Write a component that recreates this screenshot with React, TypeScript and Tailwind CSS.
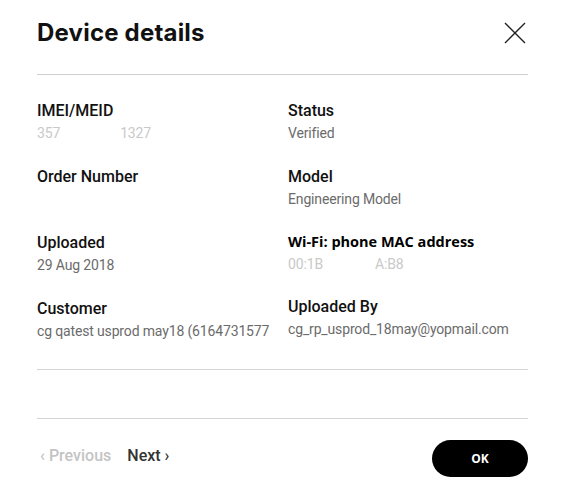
import React from "react";

const Label = ({ children }: { children: React.ReactNode }) => (
  <div className="text-[16px] leading-[22px] font-medium text-[#111]">{children}</div>
);

const Value = ({ children, light }: { children: React.ReactNode; light?: boolean }) => (
  <div className={`text-[14px] leading-[22px] tracking-[-0.15px] ${light ? "text-[#c9c9c9]" : "text-[#6b6b6b]"}`}>
    {children}
  </div>
);

export default function App() {
  return (
    <div className="w-[565px] h-[494px] bg-white font-['Roboto',sans-serif] px-[37px]">
      <div className="flex items-center justify-between h-[74px] pb-[8px]">
        <h1 className="font-['Inter',sans-serif] font-bold text-[24px] leading-[30px] text-[#111] tracking-[0.2px]">
          Device details
        </h1>
        <svg width="22" height="22" viewBox="0 0 22 22" className="mr-[2px]">
          <path d="M1 1 L21 21 M21 1 L1 21" stroke="#222" strokeWidth="1.4" fill="none" />
        </svg>
      </div>
      <div className="h-px bg-[#cfcfcf]" />
      <div className="grid grid-cols-[251px_1fr] gap-y-[22px] mt-[25px]">
        <div>
          <Label>IMEI/MEID</Label>
          <Value light>
            <span>357</span>
            <span className="inline-block w-[60px]" />
            <span>1327</span>
          </Value>
        </div>
        <div>
          <Label>Status</Label>
          <Value>Verified</Value>
        </div>
        <div>
          <Label>Order Number</Label>
          <Value>&nbsp;</Value>
        </div>
        <div>
          <Label>Model</Label>
          <Value>Engineering Model</Value>
        </div>
        <div>
          <Label>Uploaded</Label>
          <Value>29 Aug 2018</Value>
        </div>
        <div className="-mt-[1px]">
          <div className="font-['Open_Sans',sans-serif] font-bold text-[14.5px] leading-[22px] text-black">
            Wi-Fi: phone MAC address
          </div>
          <Value light>
            <span>00:1B</span>
            <span className="inline-block w-[52px]" />
            <span>A:B8</span>
          </Value>
        </div>
        <div>
          <Label>Customer</Label>
          <Value>cg qatest usprod may18 (6164731577</Value>
        </div>
        <div className="-mt-[2px]">
          <Label>Uploaded By</Label>
          <Value>cg_rp_usprod_18may@yopmail.com</Value>
        </div>
      </div>
      <div className="h-px bg-[#d4d4d4] mt-[27px]" />
      <div className="h-px bg-[#d4d4d4] mt-[48px]" />
      <div className="flex items-center justify-between mt-[21px]">
        <div className="flex items-center gap-[16px] text-[16px] font-medium pl-[3px] -mt-[5px]">
          <span className="text-[#c4c4c4]">‹ Previous</span>
          <span className="text-[#333]">Next ›</span>
        </div>
        <button className="w-[96px] h-[37px] rounded-full bg-black text-white text-[12px] font-bold font-['Open_Sans',sans-serif]">
          OK
        </button>
      </div>
    </div>
  );
}
